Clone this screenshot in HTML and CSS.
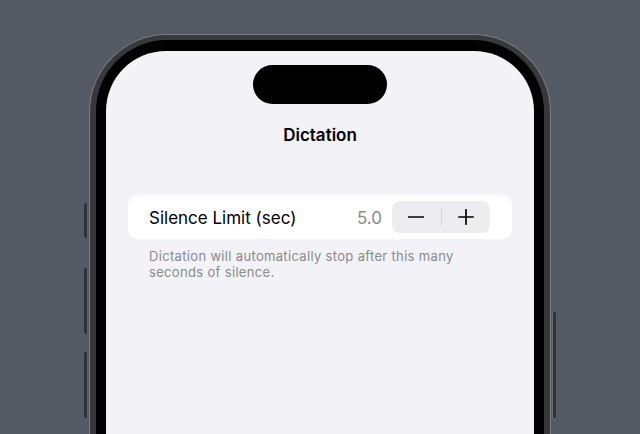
FILE: index.html
```html
<!DOCTYPE html>
<html lang="en">
<head>
<meta charset="utf-8">
<title>Dictation</title>
<link rel="stylesheet" href="styles.css">
</head>
<body>
<div class="stage">
  <div class="phone">
    <span class="btn btn-action"></span>
    <span class="btn btn-vol-up"></span>
    <span class="btn btn-vol-down"></span>
    <span class="btn btn-power"></span>
    <div class="bezel">
      <div class="screen">
        <div class="island"></div>
        <h1 class="nav-title">Dictation</h1>
        <div class="card">
          <span class="label">Silence Limit (sec)</span>
          <span class="value">5.0</span>
          <div class="stepper">
            <button class="step" aria-label="Decrement">
              <svg width="16" height="16" viewBox="0 0 16 16"><path d="M0.5 8H15.5" stroke="#000" stroke-width="1.7" stroke-linecap="round"/></svg>
            </button>
            <span class="divider"></span>
            <button class="step" aria-label="Increment">
              <svg width="16" height="16" viewBox="0 0 16 16"><path d="M0.8 8H15.2M8 0.8V15.2" stroke="#000" stroke-width="1.7" stroke-linecap="round"/></svg>
            </button>
          </div>
        </div>
        <p class="footer">Dictation will automatically stop after this many seconds of silence.</p>
      </div>
    </div>
  </div>
</div>
</body>
</html>
```

FILE: styles.css
```css
html, body {
  margin: 0;
  padding: 0;
  height: 100%;
  overflow: hidden;
  background: #545a63;
  font-family: Inter, "Noto Sans", "Liberation Sans", sans-serif;
}

.stage {
  display: flex;
  justify-content: center;
  padding-top: 34px;
}

.phone {
  position: relative;
  width: 462px;
  height: 400px;
  box-sizing: border-box;
  border: 1px solid #7b7e84;
  border-bottom: 0;
  border-radius: 78px 78px 0 0;
  background: #38393d;
  padding: 5px 6px 0;
}

.btn {
  position: absolute;
  width: 4px;
  background: #2f3237;
  border-radius: 2px 0 0 2px;
  box-shadow: inset -1px 0 0 #5c5f65;
}
.btn-action { left: -6px; top: 168px; height: 35px; }
.btn-vol-up { left: -6px; top: 233px; height: 66px; }
.btn-vol-down { left: -6px; top: 317px; height: 66px; }
.btn-power {
  right: -6px;
  top: 277px;
  height: 106px;
  border-radius: 0 2px 2px 0;
  box-shadow: inset 1px 0 0 #6a6d73;
}

.bezel {
  height: 100%;
  box-sizing: border-box;
  background: #000;
  border-radius: 71px 71px 0 0;
  padding: 11px 10px 0;
}

.screen {
  height: 100%;
  background: #f2f2f7;
  border-radius: 60px 60px 0 0;
  display: flex;
  flex-direction: column;
  align-items: center;
  padding-top: 14px;
  box-sizing: border-box;
}

.island {
  width: 134px;
  height: 39px;
  border-radius: 20px;
  background: #000;
  flex: none;
}

.nav-title {
  margin: 20px 0 0;
  font-size: 17px;
  line-height: 22px;
  font-weight: 600;
  color: #000;
  letter-spacing: 0;
}

.card {
  margin-top: 49px;
  align-self: stretch;
  margin-left: 22px;
  margin-right: 22px;
  height: 44px;
  box-sizing: border-box;
  background: #fff;
  border-radius: 10px;
  display: flex;
  align-items: center;
  padding: 0 22px 0 21px;
}

.label {
  font-size: 17px;
  color: #000;
  flex: 1;
  letter-spacing: 0;
  padding-top: 2px;
}

.value {
  font-size: 17px;
  color: #8a8a8e;
  margin-right: 10px;
  padding-top: 2px;
}

.stepper {
  width: 98px;
  height: 32px;
  background: #ededf0;
  border-radius: 8px;
  display: flex;
  align-items: center;
}

.step {
  flex: 1;
  height: 100%;
  border: 0;
  background: transparent;
  padding: 0;
  display: flex;
  align-items: center;
  justify-content: center;
}

.divider {
  width: 1px;
  height: 18px;
  background: #d6d6da;
}

.footer {
  align-self: stretch;
  margin: 9px 50px 0 43px;
  font-size: 13px;
  line-height: 16px;
  letter-spacing: 0.33px;
  color: #8a8a8e;
}
```
